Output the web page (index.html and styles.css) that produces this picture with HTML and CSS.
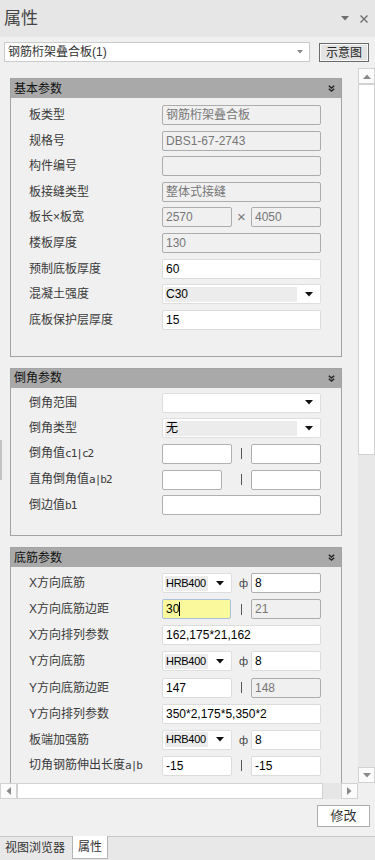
FILE: index.html
```html
<!DOCTYPE html>
<html lang="zh-CN">
<head>
    <meta charset="UTF-8">
    <meta name="viewport" content="width=device-width, initial-scale=1.0">
    <title>属性</title>
    <link rel="stylesheet" href="styles.css">
</head>
<body>
<div class="pane">
    <!-- Title bar -->
    <div class="titlebar">
        <span class="title">属性</span>
        <span class="title-tools">
            <svg width="8" height="5" viewBox="0 0 8 5"><polygon points="0,0 8,0 4,4.5" fill="#6f6f6f"/></svg>
            <svg width="8" height="8" viewBox="0 0 8 8"><path d="M0.5 0.5 L7.5 7.5 M7.5 0.5 L0.5 7.5" stroke="#6f6f6f" stroke-width="1.4"/></svg>
        </span>
    </div>

    <!-- Element selector -->
    <div class="selector">
        <div class="combo">
            <span>钢筋桁架叠合板(1)</span>
            <svg width="6" height="4" viewBox="0 0 6 4"><polygon points="0,0 6,0 3,3.5" fill="#8a8a8a"/></svg>
        </div>
        <button class="btn-sketch">示意图</button>
    </div>

    <div class="viewport">
        <div class="content">
            <!-- 基本参数 -->
            <section class="group">
                <div class="group-head">
                    <span>基本参数</span>
                    <svg class="chev" width="7" height="7" viewBox="0 0 7 7"><path d="M0.8 0.8 L3.5 3 L6.2 0.8 M0.8 3.8 L3.5 6 L6.2 3.8" stroke="#222" stroke-width="1.4" fill="none"/></svg>
                </div>
                <div class="group-body g1">
                    <div class="row"><span class="lbl">板类型</span><div class="inp dim">钢筋桁架叠合板</div></div>
                    <div class="row"><span class="lbl">规格号</span><div class="inp dim">DBS1-67-2743</div></div>
                    <div class="row"><span class="lbl">构件编号</span><div class="inp dim"></div></div>
                    <div class="row"><span class="lbl">板接缝类型</span><div class="inp dim">整体式接缝</div></div>
                    <div class="row"><span class="lbl">板长×板宽</span>
                        <div class="pair"><div class="inp dim">2570</div><span class="times">×</span><div class="inp dim">4050</div></div>
                    </div>
                    <div class="row"><span class="lbl">楼板厚度</span><div class="inp dim">130</div></div>
                    <div class="row"><span class="lbl">预制底板厚度</span><div class="inp">60</div></div>
                    <div class="row"><span class="lbl">混凝土强度</span>
                        <div class="select"><span class="val">C30</span><span class="arrow"><svg width="8" height="5" viewBox="0 0 8 5"><polygon points="0,0 8,0 4,4.5" fill="#111"/></svg></span></div>
                    </div>
                    <div class="row"><span class="lbl">底板保护层厚度</span><div class="inp">15</div></div>
                </div>
            </section>

            <!-- 倒角参数 -->
            <section class="group">
                <div class="group-head">
                    <span>倒角参数</span>
                    <svg class="chev" width="7" height="7" viewBox="0 0 7 7"><path d="M0.8 0.8 L3.5 3 L6.2 0.8 M0.8 3.8 L3.5 6 L6.2 3.8" stroke="#222" stroke-width="1.4" fill="none"/></svg>
                </div>
                <div class="group-body g2">
                    <div class="row"><span class="lbl">倒角范围</span>
                        <div class="select empty"><span class="val"></span><span class="arrow"><svg width="8" height="5" viewBox="0 0 8 5"><polygon points="0,0 8,0 4,4.5" fill="#111"/></svg></span></div>
                    </div>
                    <div class="row"><span class="lbl">倒角类型</span>
                        <div class="select"><span class="val">无</span><span class="arrow"><svg width="8" height="5" viewBox="0 0 8 5"><polygon points="0,0 8,0 4,4.5" fill="#111"/></svg></span></div>
                    </div>
                    <div class="row"><span class="lbl">倒角值<span class="sub">c1|c2</span></span>
                        <div class="pair"><div class="inp line"></div><span class="bar"></span><div class="inp line"></div></div>
                    </div>
                    <div class="row"><span class="lbl">直角倒角值<span class="sub">a|b2</span></span>
                        <div class="pair"><div class="inp line short"></div><span class="bar"></span><div class="inp line"></div></div>
                    </div>
                    <div class="row"><span class="lbl">倒边值<span class="sub">b1</span></span><div class="inp line"></div></div>
                </div>
            </section>

            <!-- 底筋参数 -->
            <section class="group">
                <div class="group-head">
                    <span>底筋参数</span>
                    <svg class="chev" width="7" height="7" viewBox="0 0 7 7"><path d="M0.8 0.8 L3.5 3 L6.2 0.8 M0.8 3.8 L3.5 6 L6.2 3.8" stroke="#222" stroke-width="1.4" fill="none"/></svg>
                </div>
                <div class="group-body g3">
                    <div class="row"><span class="lbl">X方向底筋</span>
                        <div class="pair">
                            <div class="select rebar"><span class="val">HRB400</span><span class="arrow"><svg width="8" height="5" viewBox="0 0 8 5"><polygon points="0,0 8,0 4,4.5" fill="#111"/></svg></span></div>
                            <span class="phi">ф</span><div class="inp line">8</div>
                        </div>
                    </div>
                    <div class="row"><span class="lbl">X方向底筋边距</span>
                        <div class="pair"><div class="inp focus">30<span class="caret"></span></div><span class="bar"></span><div class="inp dim">21</div></div>
                    </div>
                    <div class="row"><span class="lbl">X方向排列参数</span><div class="inp">162,175*21,162</div></div>
                    <div class="row"><span class="lbl">Y方向底筋</span>
                        <div class="pair">
                            <div class="select rebar"><span class="val">HRB400</span><span class="arrow"><svg width="8" height="5" viewBox="0 0 8 5"><polygon points="0,0 8,0 4,4.5" fill="#111"/></svg></span></div>
                            <span class="phi">ф</span><div class="inp">8</div>
                        </div>
                    </div>
                    <div class="row"><span class="lbl">Y方向底筋边距</span>
                        <div class="pair"><div class="inp">147</div><span class="bar"></span><div class="inp dim">148</div></div>
                    </div>
                    <div class="row"><span class="lbl">Y方向排列参数</span><div class="inp">350*2,175*5,350*2</div></div>
                    <div class="row"><span class="lbl">板端加强筋</span>
                        <div class="pair">
                            <div class="select rebar"><span class="val">HRB400</span><span class="arrow"><svg width="8" height="5" viewBox="0 0 8 5"><polygon points="0,0 8,0 4,4.5" fill="#111"/></svg></span></div>
                            <span class="phi">ф</span><div class="inp">8</div>
                        </div>
                    </div>
                    <div class="row"><span class="lbl">切角钢筋伸出长度<span class="sub">a|b</span></span>
                        <div class="pair"><div class="inp">-15</div><span class="bar"></span><div class="inp">-15</div></div>
                    </div>
                </div>
            </section>
        </div>

        <!-- Vertical scrollbar -->
        <div class="vscroll">
            <div class="sb-btn"><svg width="8" height="5" viewBox="0 0 8 5"><polygon points="0,5 8,5 4,0.5" fill="#8a8a8a"/></svg></div>
            <div class="sb-thumb-v"></div>
            <div class="sb-track"></div>
            <div class="sb-btn"><svg width="8" height="5" viewBox="0 0 8 5"><polygon points="0,0 8,0 4,4.5" fill="#8a8a8a"/></svg></div>
        </div>
        <div class="grip"></div>
    </div>

    <!-- Horizontal scrollbar -->
    <div class="hscroll">
        <div class="sb-btn h"><svg width="5" height="8" viewBox="0 0 5 8"><polygon points="5,0 5,8 0.5,4" fill="#8a8a8a"/></svg></div>
        <div class="sb-thumb-h"></div>
        <div class="sb-track"></div>
        <div class="sb-btn h"><svg width="5" height="8" viewBox="0 0 5 8"><polygon points="0,0 0,8 4.5,4" fill="#8a8a8a"/></svg></div>
    </div>

    <div class="actions">
        <button class="btn-edit">修改</button>
    </div>

    <div class="tabs">
        <span class="tab">视图浏览器</span>
        <span class="tab active">属性</span>
    </div>
</div>
</body>
</html>
```

FILE: styles.css
```css
/* General */
* {
    box-sizing: border-box;
}

body {
    margin: 0;
    background: #f0f0f0;
    font-family: "Liberation Sans", "Noto Sans CJK SC", sans-serif;
    font-size: 12px;
    line-height: 18px;
    color: #333;
}

.pane {
    width: 375px;
    height: 860px;
    display: flex;
    flex-direction: column;
    overflow: hidden;
}

/* Title bar */
.titlebar {
    height: 37px;
    flex: none;
    background: #e6e6e6;
    display: flex;
    align-items: center;
    justify-content: space-between;
    padding: 0 7px 0 4px;
}

.title {
    font-size: 17px;
    line-height: 22px;
    color: #444;
}

.title-tools {
    display: flex;
    align-items: center;
    gap: 11px;
}

/* Selector */
.selector {
    height: 31px;
    flex: none;
    display: flex;
    align-items: flex-start;
    padding: 5px 0 0 4px;
}

.combo {
    width: 306px;
    height: 20px;
    background: #fff;
    border: 1px solid #cbcbcb;
    display: flex;
    align-items: center;
    justify-content: space-between;
    padding: 0 6px 0 3px;
    color: #333;
}

.btn-sketch {
    margin: 1px 0 0 9px;
    width: 50px;
    height: 19px;
    padding: 0;
    font: inherit;
    line-height: 16px;
    color: #222;
    background: #e3e3e3;
    border: 1px solid #6b6b6b;
    box-shadow: inset 0 0 0 1px #f7f7f7;
}

/* Scrolling area */
.viewport {
    position: relative;
    height: 715px;
    flex: none;
    display: flex;
}

.content {
    width: 358px;
    height: 715px;
    overflow: hidden;
    padding-top: 10px;
}

.group {
    width: 332px;
    margin: 0 0 11px 10px;
    border: 1px solid #a3a3a3;
    background: #f0f0f0;
}

.group-head {
    height: 19px;
    background: #a9a9a9;
    display: flex;
    align-items: center;
    justify-content: space-between;
    padding: 0 6px 0 3px;
    color: #111;
}

.group-body {
    display: grid;
    row-gap: 5.6px;
    padding-left: 18px;
}

.g1 {
    padding-top: 7px;
    padding-bottom: 26px;
}

.g2 {
    padding-top: 5px;
    padding-bottom: 20px;
}

.g3 {
    row-gap: 6.1px;
    padding-top: 6px;
    padding-bottom: 26px;
}

.row {
    display: grid;
    grid-template-columns: 133px 159px;
    align-items: center;
    height: 20px;
}

.lbl {
    color: #3a3a3a;
    white-space: nowrap;
}

.lbl .sub {
    font-size: 11px;
    font-family: "DejaVu Sans Mono", monospace;
    letter-spacing: -1px;
}

/* Fields */
.inp {
    height: 20px;
    background: #fff;
    border: 1px solid #dcdcdc;
    border-radius: 2px;
    padding: 0 3px;
    line-height: 18px;
    color: #000;
    white-space: nowrap;
    overflow: hidden;
}

.inp.dim {
    background: #f0f0f0;
    border-color: #acacac;
    color: #777;
}

.inp.line {
    border-color: #b0b0b0;
}

.inp.short {
    width: 60px;
}

.inp.focus {
    width: 69px;
    background: #fafa9c;
    border-color: #a9c1dc;
}

.caret {
    display: inline-block;
    width: 1px;
    height: 14px;
    background: #000;
    vertical-align: -3px;
}

.pair {
    display: grid;
    grid-template-columns: 70px 19px 70px;
    align-items: center;
}

.times {
    text-align: center;
    color: #777;
    font-size: 15px;
}

.bar {
    justify-self: center;
    width: 1px;
    height: 11px;
    background: #555;
}

.phi {
    text-align: center;
    color: #444;
    font-size: 11px;
    padding-left: 4px;
}

.select {
    height: 20px;
    background: #fff;
    border: 1px solid #dedede;
    border-radius: 2px;
    display: flex;
    align-items: center;
    padding-left: 2px;
}

.select .val {
    width: calc(100% - 23px);
    height: 15px;
    line-height: 15px;
    padding-left: 1px;
    background: #ececec;
    color: #000;
    white-space: nowrap;
    overflow: hidden;
}

.select.rebar .val {
    font-size: 11px;
    letter-spacing: -0.3px;
}

.select.empty .val {
    background: transparent;
}

.select .arrow {
    flex: 1;
    display: flex;
    justify-content: center;
    padding-left: 1px;
}

/* Scrollbars */
.vscroll {
    width: 17px;
    display: flex;
    flex-direction: column;
    background: #e8e8e8;
}

.sb-btn {
    height: 16px;
    flex: none;
    display: flex;
    align-items: center;
    justify-content: center;
    background: #fbfbfb;
    border: 1px solid #d2d2d2;
}

.sb-btn.h {
    width: 17px;
    height: 16px;
}

.sb-thumb-v {
    height: 371px;
    flex: none;
    background: #fff;
    border: 1px solid #d2d2d2;
}

.sb-track {
    flex: 1;
}

.grip {
    position: absolute;
    left: 0;
    top: 372px;
    width: 2px;
    height: 40px;
    background: #c4c4c4;
}

.hscroll {
    width: 358px;
    height: 16px;
    flex: none;
    display: flex;
    background: #e6e6e6;
}

.sb-thumb-h {
    width: 306px;
    background: #fff;
    border: 1px solid #d2d2d2;
}

/* Footer */
.actions {
    height: 37px;
    flex: none;
    display: flex;
    justify-content: flex-end;
    padding: 6px 5px 0 0;
}

.btn-edit {
    width: 53px;
    height: 22px;
    padding: 0;
    font: inherit;
    font-size: 13px;
    color: #333;
    background: #fff;
    border: 1px solid #adadad;
}

.tabs {
    height: 24px;
    flex: none;
    display: flex;
    align-items: flex-start;
    gap: 7px;
    padding-left: 5px;
    background: #e8e8e8;
    border-top: 1px solid #c6c6c6;
}

.tab {
    line-height: 22px;
    color: #333;
}

.tab.active {
    margin-top: -1px;
    height: 23px;
    padding: 0 5px;
    background: #fff;
    border: 1px solid #b4b4b4;
    border-top: none;
}
```
